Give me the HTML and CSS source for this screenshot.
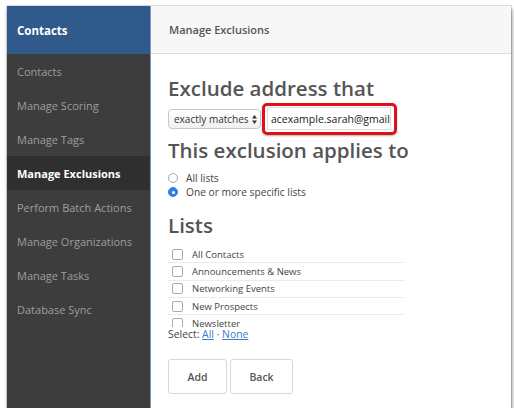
FILE: index.html
```html
<!DOCTYPE html>
<html>
<head>
<meta charset="utf-8">
<link rel="stylesheet" href="styles.css">
</head>
<body>
<div class="window">
  <aside class="sidebar">
    <div class="side-head">Contacts</div>
    <nav class="side-nav">
      <div class="side-item">Contacts</div>
      <div class="side-item">Manage Scoring</div>
      <div class="side-item">Manage Tags</div>
      <div class="side-item active">Manage Exclusions</div>
      <div class="side-item">Perform Batch Actions</div>
      <div class="side-item">Manage Organizations</div>
      <div class="side-item">Manage Tasks</div>
      <div class="side-item">Database Sync</div>
    </nav>
  </aside>
  <main class="main">
    <div class="topbar">Manage Exclusions</div>
    <div class="content">
      <h2 class="h1 first">Exclude address that</h2>
      <div class="match-row">
        <div class="select">exactly matches <span class="arrows"><svg width="5" height="9" viewBox="0 0 5 9"><path d="M2.5 0 L5 3.5 H0 Z M2.5 9 L0 5.5 H5 Z" fill="#333"/></svg></span></div>
        <div class="highlight"><div class="input">acexample.sarah@gmail</div></div>
      </div>
      <h2 class="h1 second">This exclusion applies to</h2>
      <div class="radios">
        <label class="radio-row"><span class="radio"></span>All lists</label>
        <label class="radio-row"><span class="radio checked"></span>One or more specific lists</label>
      </div>
      <h2 class="h1 third">Lists</h2>
      <div class="lists">
        <div class="list-row"><span class="cb"></span>All Contacts</div>
        <div class="list-row"><span class="cb"></span>Announcements &amp; News</div>
        <div class="list-row"><span class="cb"></span>Networking Events</div>
        <div class="list-row"><span class="cb"></span>New Prospects</div>
        <div class="list-row"><span class="cb"></span>Newsletter</div>
      </div>
      <div class="select-links">Select: <a href="#">All</a> · <a href="#">None</a></div>
      <div class="buttons">
        <button class="btn add">Add</button>
        <button class="btn back">Back</button>
      </div>
    </div>
  </main>
</div>
</body>
</html>
```
FILE: styles.css
```css
html, body {
  margin: 0;
  padding: 0;
  background: #ffffff;
  font-family: "Open Sans", "DejaVu Sans", sans-serif;
}
.window {
  margin: 6px 0 0 7px;
  width: 504px;
  height: 402px;
  display: flex;
  background: #fff;
  box-shadow: 0 0 0 1px rgba(0,0,0,0.12), 1px 3px 4px rgba(0,0,0,0.45);
  overflow: hidden;
}
.sidebar {
  width: 143px;
  flex: none;
  background: #3d3d3d;
  display: flex;
  flex-direction: column;
}
.side-head {
  height: 48px;
  background: #305a8c;
  color: #fff;
  font-weight: 700;
  font-size: 11.5px;
  display: flex;
  align-items: center;
  padding-left: 10px;
  box-sizing: border-box;
}
.side-item {
  height: 34px;
  display: flex;
  align-items: center;
  padding-left: 10px;
  font-size: 11px;
  color: #9e9e9e;
}
.side-item.active {
  background: #2f2f2f;
  color: #fff;
  font-weight: 700;
}
.main {
  flex: 1;
  display: flex;
  flex-direction: column;
  border-left: 1px solid #7d9cc0;
}
.topbar {
  height: 48px;
  box-sizing: border-box;
  background: #f7f7f7;
  border-bottom: 1px solid #dcdcdc;
  display: flex;
  align-items: center;
  padding-left: 18px;
  font-size: 11px;
  font-weight: 600;
  color: #555;
}
.content {
  padding-left: 17px;
}
.h1 {
  margin: 0;
  font-size: 20.5px;
  font-weight: 600;
  color: #555;
  line-height: 22px;
}
.h1.first { margin-top: 23px; }
.match-row {
  display: flex;
  align-items: center;
  margin-top: 4px;
}
.select {
  width: 93px;
  height: 20px;
  box-sizing: border-box;
  border: 1px solid #c8c8c8;
  border-radius: 4px;
  background: linear-gradient(#ffffff, #f0f0f0);
  font-size: 10px;
  color: #333;
  display: flex;
  align-items: center;
  padding-left: 5px;
  gap: 3px;
  white-space: nowrap;
}
.arrows { display: flex; align-items: center; }
.highlight {
  margin-left: 1px;
  border: 3px solid #e0101a;
  border-radius: 5px;
  padding: 1px 3px 2px 2px;
  box-shadow: 0 1px 2px rgba(0,0,0,0.3);
}
.input {
  width: 124px;
  height: 23px;
  box-sizing: border-box;
  border: 1px solid #dcdcdc;
  font-size: 10.5px;
  color: #222;
  display: flex;
  align-items: center;
  padding-left: 3px;
}
.h1.second { margin-top: 4px; }
.radios {
  margin-top: 10px;
  display: flex;
  flex-direction: column;
}
.radio-row {
  display: flex;
  align-items: center;
  height: 14px;
  font-size: 10.2px;
  color: #444;
  gap: 8px;
}
.radio {
  width: 10px;
  height: 10px;
  border-radius: 50%;
  border: 1px solid #aaa;
  box-sizing: border-box;
  background: #fff;
}
.radio.checked {
  background: #2f80e6;
  border-color: #2f80e6;
  position: relative;
}
.radio.checked::after {
  content: "";
  position: absolute;
  left: 2.5px;
  top: 2.5px;
  width: 3px;
  height: 3px;
  border-radius: 50%;
  background: #fff;
}
.h1.third { margin-top: 15px; }
.lists {
  margin-top: 10px;
  width: 237px;
  height: 81px;
  overflow: hidden;
}
.list-row {
  height: 17.3px;
  box-sizing: border-box;
  border-bottom: 1px solid #ececec;
  display: flex;
  align-items: center;
  font-size: 9.5px;
  color: #444;
  padding-left: 4px;
  gap: 9px;
}
.cb {
  width: 9px;
  height: 9px;
  border: 1px solid #aaa;
  border-radius: 2px;
  background: #fff;
}
.select-links {
  margin-top: 1px;
  font-size: 10.4px;
  color: #444;
  line-height: 12px;
}
.select-links a {
  color: #3d7cc9;
}
.buttons {
  margin-top: 19px;
  display: flex;
  gap: 3px;
}
.btn {
  height: 35px;
  border: 1px solid #d8d8d8;
  border-radius: 3px;
  background: #fff;
  font-family: "Open Sans", "DejaVu Sans", sans-serif;
  font-size: 10.5px;
  font-weight: 600;
  color: #555;
  padding: 0;
}
.btn.add { width: 59px; }
.btn.back { width: 63px; }
```
